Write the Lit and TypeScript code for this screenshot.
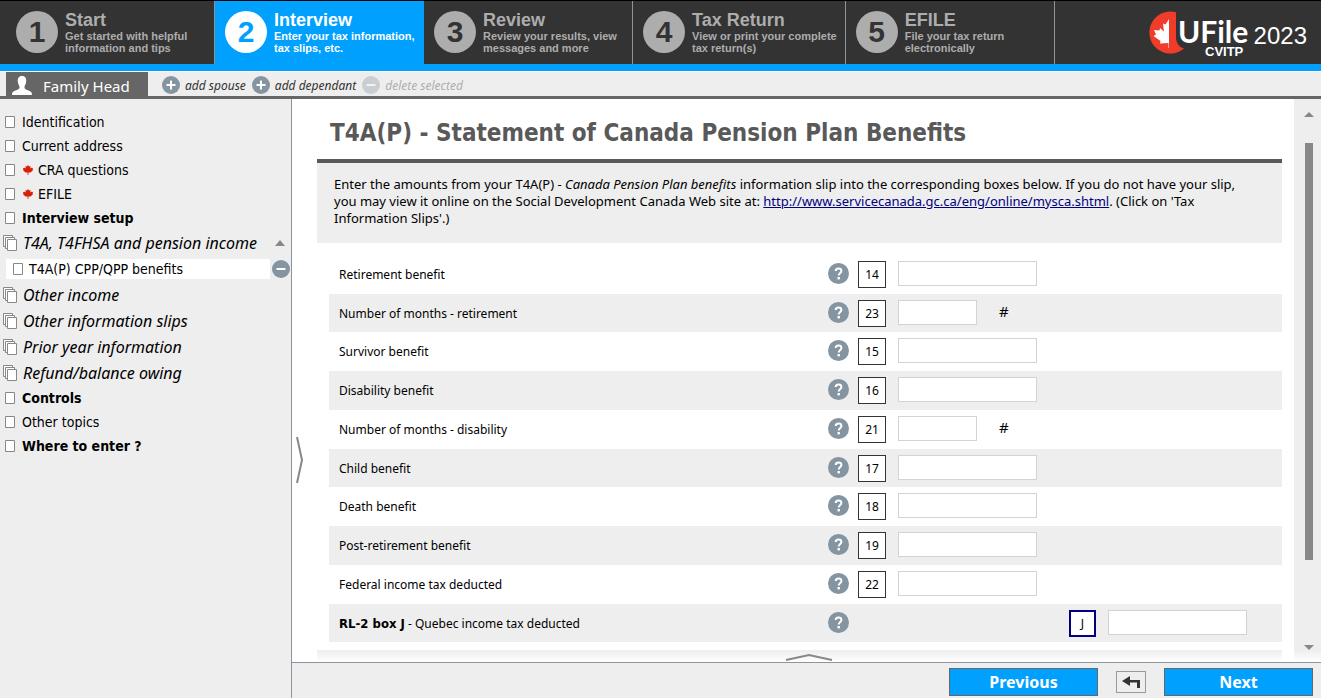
import { LitElement, html, css, svg, nothing } from "lit";
import { customElement, property } from "lit/decorators.js";
import { classMap } from "lit/directives/class-map.js";

interface Step {
  title: string;
  lines: [string, string];
  active?: boolean;
}

interface NavItem {
  text: string;
  kind?: "group" | "sub";
  bold?: boolean;
  leaf?: boolean;
  open?: boolean;
}

interface Field {
  label: string;
  lead?: string;
  box: string;
  months?: boolean;
  quebec?: boolean;
}

const STEPS: Step[] = [
  { title: "Start", lines: ["Get started with helpful", "information and tips"] },
  { title: "Interview", lines: ["Enter your tax information,", "tax slips, etc."], active: true },
  { title: "Review", lines: ["Review your results, view", "messages and more"] },
  { title: "Tax Return", lines: ["View or print your complete", "tax return(s)"] },
  { title: "EFILE", lines: ["File your tax return", "electronically"] },
];

const NAV: NavItem[] = [
  { text: "Identification" },
  { text: "Current address" },
  { text: "CRA questions", leaf: true },
  { text: "EFILE", leaf: true },
  { text: "Interview setup", bold: true },
  { text: "T4A, T4FHSA and pension income", kind: "group", open: true },
  { text: "T4A(P) CPP/QPP benefits", kind: "sub" },
  { text: "Other income", kind: "group" },
  { text: "Other information slips", kind: "group" },
  { text: "Prior year information", kind: "group" },
  { text: "Refund/balance owing", kind: "group" },
  { text: "Controls", bold: true },
  { text: "Other topics" },
  { text: "Where to enter ?", bold: true },
];

const FIELDS: Field[] = [
  { label: "Retirement benefit", box: "14" },
  { label: "Number of months - retirement", box: "23", months: true },
  { label: "Survivor benefit", box: "15" },
  { label: "Disability benefit", box: "16" },
  { label: "Number of months - disability", box: "21", months: true },
  { label: "Child benefit", box: "17" },
  { label: "Death benefit", box: "18" },
  { label: "Post-retirement benefit", box: "19" },
  { label: "Federal income tax deducted", box: "22" },
  { lead: "RL-2 box J", label: " - Quebec income tax deducted", box: "J", quebec: true },
];

const reset = css`
  * { box-sizing: border-box; }
  button { font: inherit; color: inherit; background: none; border: 0; padding: 0; margin: 0; cursor: pointer; }
  a { color: inherit; text-decoration: none; }
  svg { display: block; flex: none; }
`;

const signIcon = (plus: boolean) => svg`
  <svg width="18" height="18" viewBox="0 0 18 18" aria-hidden="true">
    <circle cx="9" cy="9" r="9" fill="#8494a1"/>
    <path d=${plus ? "M4.5 9h9M9 4.5v9" : "M4.5 9h9"} stroke="#fff" stroke-width="2" fill="none"/>
  </svg>`;

@customElement("uf-steps")
class UfSteps extends LitElement {
  static styles = [reset, css`
    :host { display: block; font-family: "Liberation Sans", Arial, sans-serif; }
    .bar { display: flex; height: 71px; background: #333; border-bottom: 7px solid #00a0ff; border-top: 1px solid #000; }
    .step { display: flex; gap: 7px; min-width: 209px; padding: 10px 8px 0 10px; border-right: 1px solid #8d959c; color: #adadad; font-weight: bold; white-space: nowrap; }
    .step:first-child { padding-left: 16px; min-width: 215px; }
    .active { background: #00a0ff; color: #fff; border-right-color: #00a0ff; }
    .num { display: flex; align-items: center; justify-content: center; width: 42px; height: 42px; border-radius: 50%; background: #adadad; color: #333; font-size: 30px; line-height: 42px; }
    .active .num { background: #fff; color: #00a0ff; }
    .title { display: block; font-size: 18px; line-height: 18px; margin-bottom: 1px; }
    .desc { display: block; font-size: 11px; line-height: 12px; }
    .brand { display: flex; align-items: center; margin-left: auto; padding-right: 14px; color: #fff; gap: 6px; }
    .logo { overflow: visible; }
    .year { font-size: 24px; padding-top: 6px; }
    .word { font-family: Lato, sans-serif; font-weight: 700; font-size: 30px; fill: #fff; }
    .sub { font-family: "Liberation Sans", Arial, sans-serif; font-weight: bold; font-size: 13px; fill: #fff; }
  `];
  render() {
    return html`<header class="bar">
      ${STEPS.map((s, i) => html`<a href="#" class=${classMap({ step: true, active: !!s.active })}>
        <span class="num">${i + 1}</span>
        <span><span class="title">${s.title}</span>${s.lines.map((l) => html`<span class="desc">${l}</span>`)}</span>
      </a>`)}
      <div class="brand">
        <svg class="logo" width="100" height="54" viewBox="0 0 100 54" role="img" aria-label="UFile CVITP">
          <path d="M28 6.300 A21 21 0 1 0 36 42.500 C31 41 28 37 28 31Z" fill="#f03c28"/>
          <path d="M21 13 L17.500 18.500 L15 17.500 L16 25.500 L12 22 L11.500 24.500 L6 24 L8 28.500 L5.500 30 L12.500 35 L12 37.500 L20.500 37 L20.500 42 L21 42Z" fill="#fff"/>
          <text x="30" y="37" class="word">UFile</text>
          <text x="57" y="50" class="sub">CVITP</text>
        </svg>
        <span class="year">2023</span>
      </div>
    </header>`;
  }
}

@customElement("uf-people")
class UfPeople extends LitElement {
  static styles = [reset, css`
    :host { display: block; }
    .bar { display: flex; align-items: center; height: 28px; padding: 0 6px; background: #eee; border-top: 1px solid #fff; border-bottom: 3px solid #666; font-size: 12px; font-style: italic; color: #333; }
    .tab { display: flex; align-items: flex-end; gap: 11px; width: 142px; height: 24px; padding-left: 6px; background: #666; color: #fff; font-size: 15px; line-height: 20px; font-style: normal; margin-right: 14px; }
    .act { display: flex; align-items: center; gap: 5px; margin-right: 6px; padding-top: 2px; white-space: nowrap; }
    .off { opacity: 0.35; }
  `];
  render() {
    return html`<nav class="bar">
      <button class="tab">
        <svg width="20" height="20" viewBox="0 0 20 20" aria-hidden="true"><path d="M10 0C6.500 0 5.500 2.500 5.800 5.500C6 8 7 9 7.500 10.500C7.800 13 6.500 13.500 3.500 14.500C1 15.300 0 16.500 0 19H20C20 16.500 19 15.300 16.500 14.500C13.500 13.500 12.200 13 12.500 10.500C13 9 14 8 14.200 5.500C14.500 2.500 13.500 0 10 0Z" fill="#fff"/></svg>
        Family Head
      </button>
      <button class="act">${signIcon(true)}add spouse</button>
      <button class="act">${signIcon(true)}add dependant</button>
      <button class="act off" disabled>${signIcon(false)}delete selected</button>
    </nav>`;
  }
}

@customElement("uf-nav")
class UfNav extends LitElement {
  static styles = [reset, css`
    :host { display: block; width: 292px; flex: none; background: #eee; border-right: 1px solid #8d959c; padding-top: 11px; font-family: "DejaVu Sans Condensed", "DejaVu Sans", sans-serif; font-stretch: condensed; font-size: 14px; color: #000; }
    .row { display: flex; align-items: center; height: 24px; padding-left: 5px; }
    .link { display: flex; align-items: center; gap: 7px; white-space: nowrap; }
    .leaf { gap: 4px; display: flex; align-items: center; }
    .bold { font-weight: bold; }
    .group { height: 26px; padding-left: 3px; font-family: "Noto Sans", sans-serif; font-size: 16px; font-style: italic; }
    .group .link { gap: 6px; }
    .arrow { margin-left: auto; margin-right: 6px; }
    .sub { height: 26px; padding-left: 6px; gap: 2px; }
    .sub .link { flex: 1; height: 20px; padding-left: 7px; background: #fff; gap: 6px; }
    .del { margin-right: 1px; }
  `];
  private icon(group: boolean) {
    return group
      ? html`<svg width="14" height="16" viewBox="0 0 14 16" aria-hidden="true"><g fill="#fff" stroke="#888"><path d="M.5.5h9v11h-9z"/><path d="M2.500 2.500h9v11h-9z"/><path d="M4.500 4.500h9v11h-9z"/></g></svg>`
      : html`<svg width="10" height="12" viewBox="0 0 10 12" aria-hidden="true"><path d="M.5.5h9v11h-9z" fill="#fff" stroke="#888"/></svg>`;
  }
  render() {
    return html`<nav>
      ${NAV.map((n) => html`<div class=${classMap({ row: true, bold: !!n.bold, group: n.kind === "group", sub: n.kind === "sub" })}>
        <a href="#" class="link">${this.icon(n.kind === "group")}
          ${n.leaf
            ? html`<span class="leaf"><svg width="12" height="12" viewBox="0 0 12 12" aria-hidden="true"><path d="M6 1L7 2.500L8.500 2L8.300 4.500L9.500 3.800L11 4L10.500 5.500L11.200 6L8.500 8.500L6.400 8.500V11H5.600V8.500L3.500 8.500L.8 6L1.500 5.500L1 4L2.500 3.800L3.700 4.500L3.500 2L5 2.500Z" fill="#d81e05"/></svg>${n.text}</span>`
            : n.text}
        </a>
        ${n.open ? html`<svg class="arrow" width="10" height="6" viewBox="0 0 10 6" aria-hidden="true"><path d="M0 6L5 0L10 6Z" fill="#888"/></svg>` : nothing}
        ${n.kind === "sub" ? html`<button class="del" aria-label="Delete slip">${signIcon(false)}</button>` : nothing}
      </div>`)}
    </nav>`;
  }
}

@customElement("uf-field")
class UfField extends LitElement {
  @property({ attribute: false }) field!: Field;
  static styles = [reset, css`
    :host { display: grid; grid-template-columns: 1fr 30px 40px 171px 39px 174px; align-items: start; padding: 6px 0 0 10px; font-size: 12px; }
    .label { line-height: 28px; }
    .lead { font-family: "DejaVu Sans Condensed", "DejaVu Sans", sans-serif; font-stretch: condensed; font-size: 13px; }
    .help { padding-top: 2px; width: 21px; }
    .code { width: 28px; height: 27px; border: 1px solid #333; background: #fff; line-height: 26px; text-align: center; }
    .quebec { width: 27px; border: 2px solid #000080; line-height: 23px; grid-column: 5; }
    .value { display: flex; align-items: flex-start; gap: 22px; font-size: 15px; line-height: 22px; }
    .amount { display: block; width: 139px; height: 25px; border: 1px solid #d3d3d3; background: #fff; font: inherit; padding: 0 4px; border-radius: 0; }
    .short { width: 79px; }
  `];
  render() {
    const f = this.field;
    return html`
      <label class="label" for="amount">${f.lead ? html`<b class="lead">${f.lead}</b>` : nothing}${f.label}</label>
      <button class="help" aria-label="Help">
        <svg width="21" height="21" viewBox="0 0 21 21" aria-hidden="true"><circle cx="10.500" cy="10.500" r="10.500" fill="#8494a1"/><path d="M7.700 8C7.700 6.300 8.800 5.500 10.500 5.500C12.300 5.500 13.400 6.500 13.400 7.900C13.400 9.900 10.700 10 10.700 12.600" fill="none" stroke="#fff" stroke-width="2"/><rect x="9.500" y="14" width="2.400" height="2.400" fill="#fff"/></svg>
      </button>
      <span class=${classMap({ code: true, quebec: !!f.quebec })}>${f.box}</span>
      <span class="value"><input id="amount" type="text" class=${classMap({ amount: true, short: !!f.months })}>${f.months ? html`<span>#</span>` : nothing}</span>`;
  }
}

@customElement("app-root")
class AppRoot extends LitElement {
  static styles = [reset, css`
    :host { display: flex; flex-direction: column; height: 100vh; overflow: hidden; background: #fff; color: #000; font-family: "Noto Sans", "DejaVu Sans", sans-serif; }
    .body { display: flex; flex: 1; min-height: 0; }
    .main { display: flex; flex-direction: column; flex: 1; min-width: 0; }
    .view { display: flex; flex: 1; min-height: 0; position: relative; }
    .page { flex: 1; min-width: 0; overflow: hidden; padding: 0 12px 0 25px; }
    .heading { margin: 0; padding: 19px 13px 11px; font-family: "DejaVu Sans Condensed", "DejaVu Sans", sans-serif; font-stretch: condensed; font-size: 24px; line-height: 30px; color: #595959; border-bottom: 4px solid #595959; }
    .intro { margin: 0 0 12px; padding: 13px 24px 16px 17px; background: #eee; font-size: 13px; line-height: 17px; }
    .url { color: #000080; text-decoration: underline; }
    .fields { margin-left: 12px; }
    .row { height: 39px; }
    .row:nth-child(even) { background: #eee; }
    .row:nth-child(4n + 2) { height: 38px; }
    .next-section { height: 60px; margin-top: 8px; background: #eee; }
    .rail { display: flex; flex-direction: column; align-items: center; width: 27px; background: #eee; padding: 13px 0 12px 3px; }
    .track { flex: 1; padding: 26px 0 85px; display: flex; }
    .thumb { width: 8px; background: #888; }
    .fade { position: absolute; left: 0; right: 0; bottom: 0; height: 12px; background: linear-gradient(rgba(255, 255, 255, 0), #fff); }
    .pull-left { position: absolute; left: 4px; top: 337px; }
    .pull-up { position: absolute; left: 50%; bottom: 1px; margin-left: -22px; }
    .foot { display: flex; justify-content: flex-end; align-items: center; gap: 18px; height: 36px; padding: 3px 8px 0; background: #eee; border-top: 1px solid #8d959c; }
    .go { width: 149px; height: 28px; background: #00a0ff; border: 1px solid #666; color: #fff; font-weight: bold; font-size: 16px; line-height: 24px; }
    .back { display: grid; place-items: center; width: 30px; height: 22px; border: 1px solid #999; }
  `];
  render() {
    return html`
      <uf-steps></uf-steps>
      <uf-people></uf-people>
      <div class="body">
        <uf-nav></uf-nav>
        <main class="main">
          <div class="view">
            <div class="page">
              <h1 class="heading">T4A(P) - Statement of Canada Pension Plan Benefits</h1>
              <p class="intro">Enter the amounts from your T4A(P) - <i>Canada Pension Plan benefits</i> information slip into the corresponding boxes below. If you do not have your slip, you may view it online on the Social Development Canada Web site at: <a class="url" href="http://www.servicecanada.gc.ca/eng/online/mysca.shtml">http://www.servicecanada.gc.ca/eng/online/mysca.shtml</a>. (Click on 'Tax Information Slips'.)</p>
              <div class="fields">${FIELDS.map((f) => html`<uf-field class="row" .field=${f}></uf-field>`)}</div>
              <div class="next-section"></div>
            </div>
            <div class="rail">
              <svg width="10" height="5" viewBox="0 0 10 5" aria-hidden="true"><path d="M0 5L5 0L10 5Z" fill="#888"/></svg>
              <div class="track"><div class="thumb"></div></div>
              <svg width="10" height="5" viewBox="0 0 10 5" aria-hidden="true"><path d="M0 0L5 5L10 0Z" fill="#888"/></svg>
            </div>
            <div class="fade"></div>
            <button class="pull-left" aria-label="Expand menu"><svg width="8" height="48" viewBox="0 0 8 48" aria-hidden="true"><path d="M1 1L6 24L1 47" fill="none" stroke="#888" stroke-width="2"/></svg></button>
            <button class="pull-up" aria-label="Expand footer"><svg width="48" height="8" viewBox="0 0 48 8" aria-hidden="true"><path d="M1 7L24 2L47 7" fill="none" stroke="#888" stroke-width="2"/></svg></button>
          </div>
          <footer class="foot">
            <button class="go">Previous</button>
            <button class="back" aria-label="Back"><svg width="18" height="12" viewBox="0 0 18 12" aria-hidden="true"><path d="M0 5L8 0V4H18V12H15V6.500H8V10Z" fill="#333"/></svg></button>
            <button class="go">Next</button>
          </footer>
        </main>
      </div>`;
  }
}
